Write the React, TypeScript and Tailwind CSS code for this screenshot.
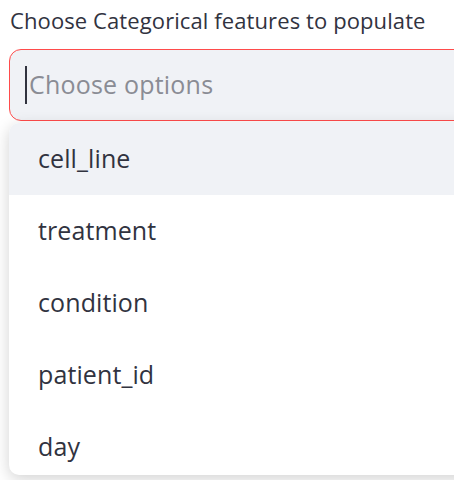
import React from "react";

export default function App() {
  const items = ["cell_line", "treatment", "condition", "patient_id", "day"];
  return (
    <div className="w-[454px] h-[480px] bg-white overflow-hidden relative" style={{ fontFamily: "'Open Sans', Lato, sans-serif" }}>
      <div className="pl-[10px] pt-[4px] h-[49px] text-[22px] leading-[32px] text-[#31333F] tracking-[0.1px]">
        Choose Categorical features to populate
      </div>
      <div className="ml-[9px] w-[470px] h-[72px] rounded-[12px] border-[1.5px] border-[#ff4b4b] bg-[#f0f2f6] flex items-center pl-[15px]">
        <div className="w-[2px] h-[38px] bg-[#31333F] mr-[2px]" />
        <span className="text-[25px] text-[#8a8c94] tracking-[0.2px]">Choose options</span>
      </div>
      <div className="ml-[9px] mt-[2px] w-[470px] h-[352px] rounded-[10px] bg-white overflow-hidden shadow-[0_4px_16px_rgba(0,0,0,0.18)]">
        {items.map((it, i) => (
          <div
            key={it}
            className={`h-[72px] flex items-center pl-[29px] text-[25px] text-[#31333F] tracking-[0.1px] ${i === 0 ? "bg-[#f0f2f6]" : ""}`}
          >
            {it}
          </div>
        ))}
      </div>
    </div>
  );
}
